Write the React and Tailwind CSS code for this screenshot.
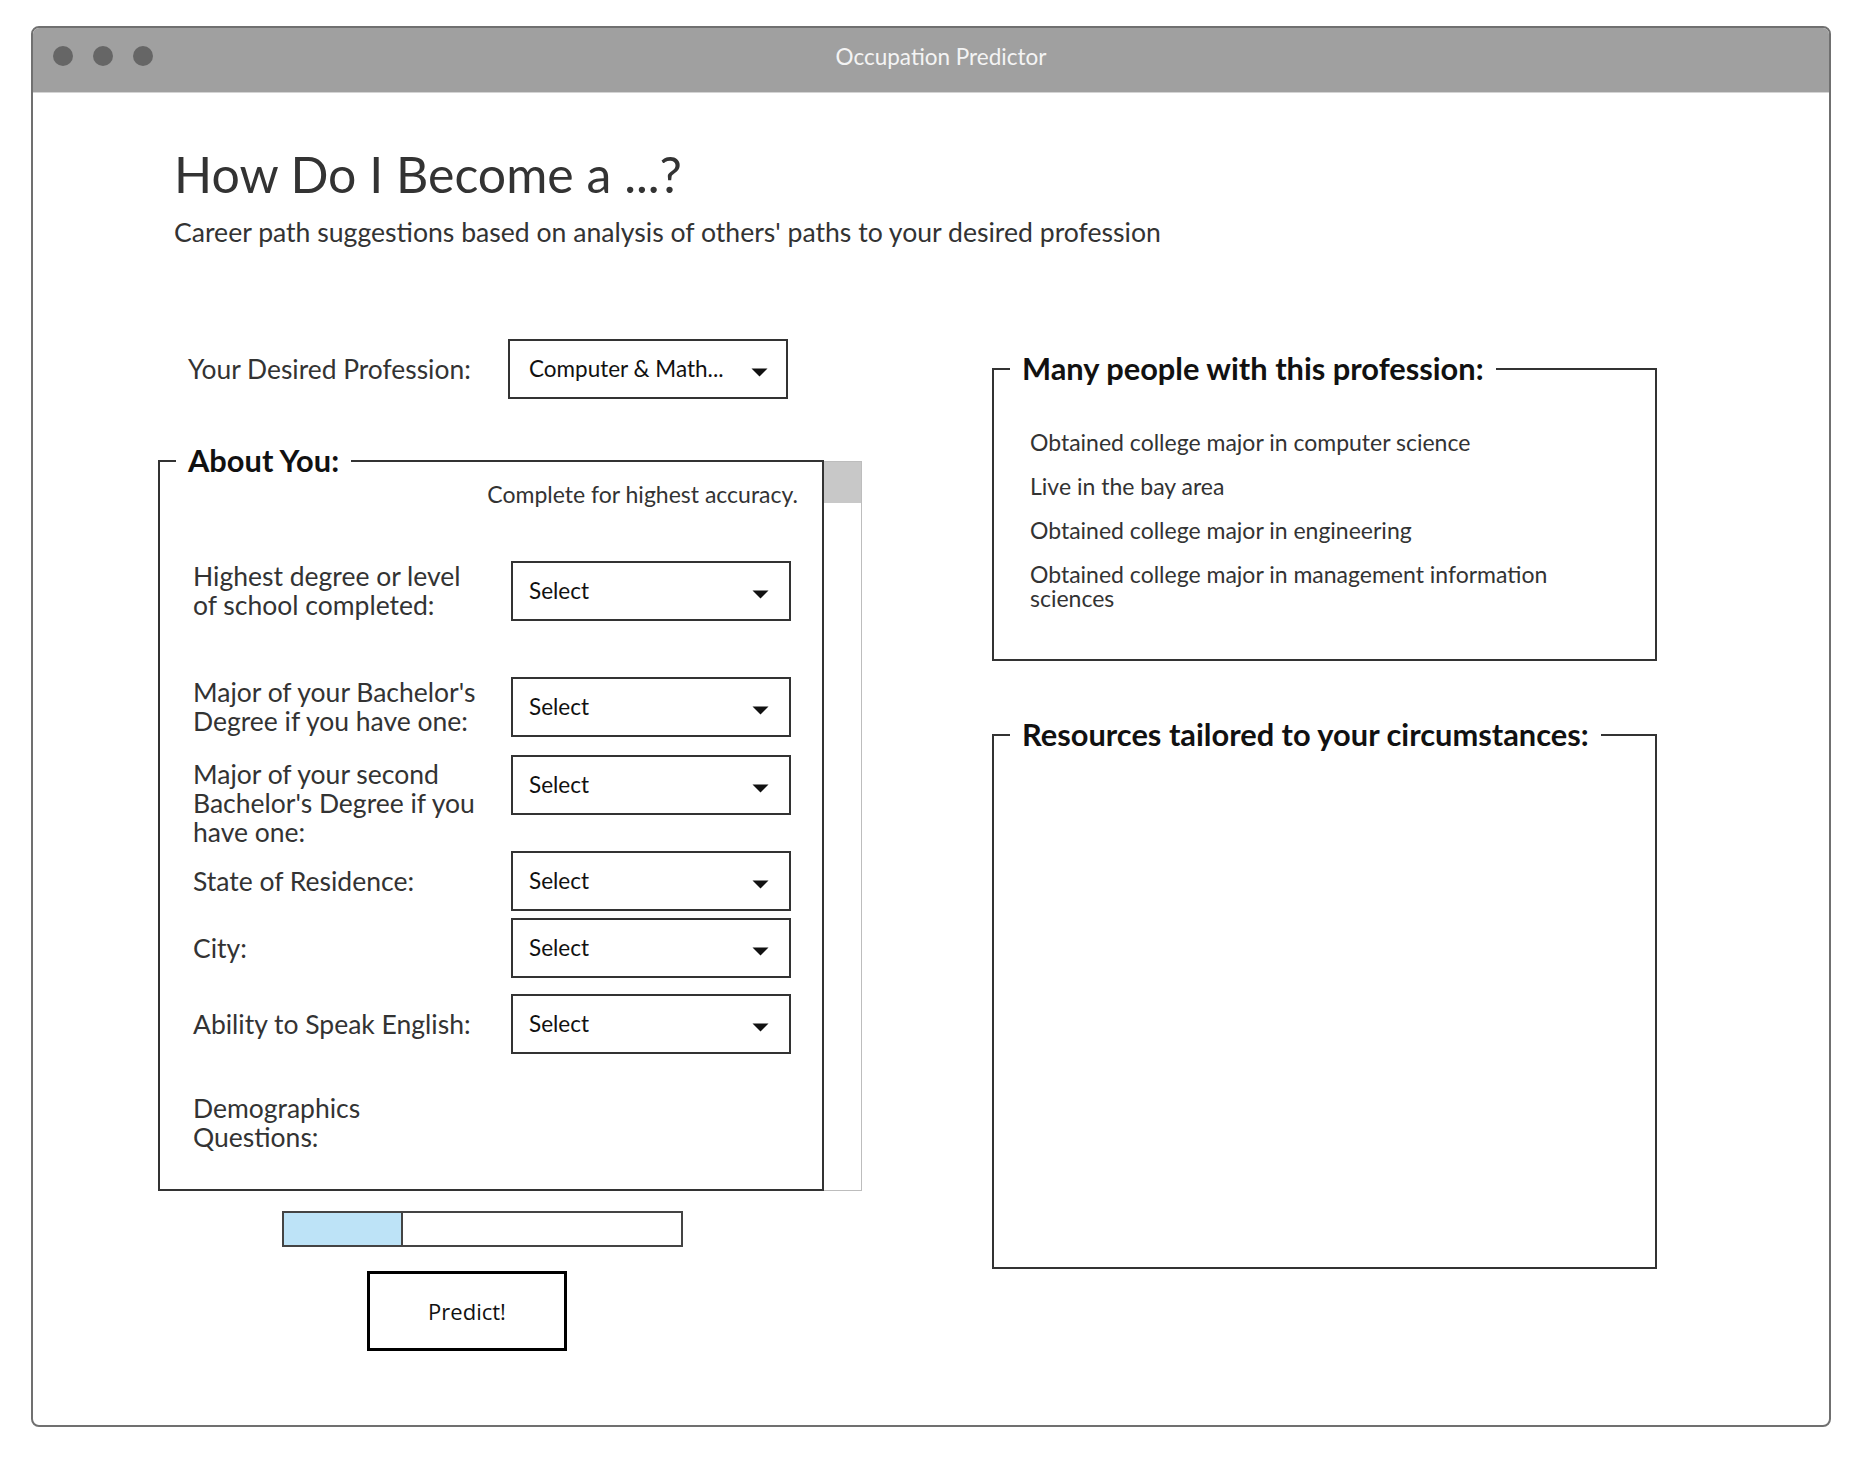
import React from 'react'

function Caret() {
  return (
    <svg width="17" height="9" viewBox="0 0 17 9" className="mt-[6px] shrink-0">
      <path d="M0.5 0.5 H16.5 L8.5 8.5 Z" fill="#111" />
    </svg>
  )
}

function Dropdown({ value = 'Select', className = '' }) {
  return (
    <div className={`flex items-center justify-between w-[280px] h-[60px] border-2 border-[#333] bg-white text-[22.5px] leading-[26px] text-[#111] ${className}`}>
      <span>{value}</span>
      <Caret />
    </div>
  )
}

function Legend({ children }) {
  return (
    <legend className="ml-[16px] px-[12px] h-[40px] text-[30.8px] leading-[40px] font-bold text-[#111]">
      {children}
    </legend>
  )
}

const peopleFacts = [
  'Obtained college major in computer science',
  'Live in the bay area',
  'Obtained college major in engineering',
  'Obtained college major in management information sciences',
]

export default function App() {
  return (
    <div className="min-h-screen bg-white pt-[26px] pl-[31px] font-['Lato','Noto_Sans',sans-serif]">
      {/* Window frame */}
      <div className="w-[1800px] h-[1401px] border-2 border-[#707070] rounded-[8px] overflow-hidden flex flex-col">
        {/* Title bar */}
        <div className="h-[65px] shrink-0 bg-[#a0a0a0] border-b border-[#d4d4d4] grid grid-cols-[1fr_auto_1fr]">
          <div className="flex gap-[20px] pl-[20px] pt-[18px]">
            <div className="w-[20px] h-[20px] rounded-full bg-[#666]" />
            <div className="w-[20px] h-[20px] rounded-full bg-[#666]" />
            <div className="w-[20px] h-[20px] rounded-full bg-[#666]" />
          </div>
          <div className="pt-[17px] pl-[20px] text-[22.5px] leading-[24px] text-[#f4f4f4]">Occupation Predictor</div>
          <div />
        </div>

        {/* Heading */}
        <div className="pl-[141px] pt-[51px] text-[#333]">
          <h1 className="text-[50px] leading-[60px] font-normal">How Do I Become a ...?</h1>
          <p className="mt-[12px] text-[26.6px] leading-[32px]">
            Career path suggestions based on analysis of others' paths to your desired profession
          </p>
        </div>

        {/* Columns */}
        <div className="flex pl-[125px] mt-[91px]">
          {/* Left column */}
          <div className="w-[704px] flex flex-col">
            <div className="flex items-center pl-[30px]">
              <div className="w-[320px] text-[26.4px] leading-[30px] text-[#333]">Your Desired Profession:</div>
              <Dropdown value="Computer & Math..." className="pl-[19px] pr-[18px]" />
            </div>

            <div className="flex mt-[42px]">
              <fieldset className="w-[666px] h-[750px] border-2 border-[#333]">
                <Legend>About You:</Legend>
                <p className="text-right pr-[24px] text-[23px] leading-[26px] text-[#333]">Complete for highest accuracy.</p>

                <div className="pl-[33px] text-[26.5px] leading-[29px] text-[#333]">
                  <div className="flex items-center mt-[54px]">
                    <div className="w-[318px]">Highest degree or level<br />of school completed:</div>
                    <Dropdown className="pl-[16px] pr-[20px]" />
                  </div>
                  <div className="flex items-center mt-[56px]">
                    <div className="w-[318px]">Major of your Bachelor's<br />Degree if you have one:</div>
                    <Dropdown className="pl-[16px] pr-[20px]" />
                  </div>
                  <div className="flex items-start mt-[18px]">
                    <div className="w-[318px] mt-[5px]">Major of your second<br />Bachelor's Degree if you<br />have one:</div>
                    <Dropdown className="pl-[16px] pr-[20px]" />
                  </div>
                  <div className="flex items-center mt-[4px]">
                    <div className="w-[318px]">State of Residence:</div>
                    <Dropdown className="pl-[16px] pr-[20px]" />
                  </div>
                  <div className="flex items-center mt-[7px]">
                    <div className="w-[318px]">City:</div>
                    <Dropdown className="pl-[16px] pr-[20px]" />
                  </div>
                  <div className="flex items-center mt-[16px]">
                    <div className="w-[318px]">Ability to Speak English:</div>
                    <Dropdown className="pl-[16px] pr-[20px]" />
                  </div>
                  <div className="mt-[40px]">Demographics<br />Questions:</div>
                </div>
              </fieldset>

              {/* scrollbar */}
              <div className="w-[38px] h-[730px] mt-[20px] border-y border-r border-[#bdbdbd]">
                <div className="h-[41px] bg-[#c8c8c8]" />
              </div>
            </div>

            {/* progress */}
            <div className="mt-[20px] ml-[124px] w-[401px] h-[36px] border-2 border-[#444] flex">
              <div className="w-[119px] h-full bg-[#bde3f7] border-r-2 border-[#444]" />
            </div>

            <button className="mt-[24px] ml-[209px] w-[200px] h-[80px] border-[3px] border-black bg-white text-[22px] text-[#111] font-['Open_Sans',sans-serif]">
              Predict!
            </button>
          </div>

          {/* Right column */}
          <div className="ml-[130px] w-[665px] flex flex-col">
            <fieldset className="mt-[10px] h-[312px] border-2 border-[#333]">
              <Legend>Many people with this profession:</Legend>
              <ul className="pl-[36px] pr-[60px] pt-[41px] flex flex-col gap-[20px] text-[23px] leading-[24px] text-[#333]">
                {peopleFacts.map(f => (
                  <li key={f}>{f}</li>
                ))}
              </ul>
            </fieldset>

            <fieldset className="mt-[54px] h-[554px] border-2 border-[#333]">
              <Legend>Resources tailored to your circumstances:</Legend>
            </fieldset>
          </div>
        </div>
      </div>
    </div>
  )
}
